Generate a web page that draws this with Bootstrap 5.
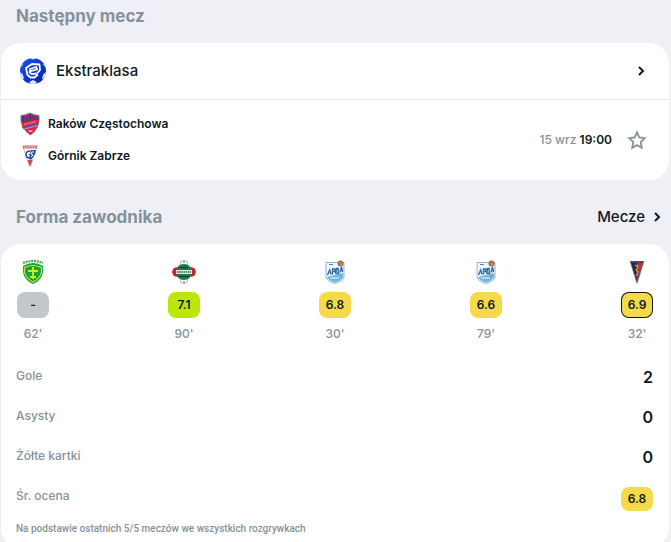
<!DOCTYPE html>
<html lang="pl">
<head>
<meta charset="utf-8">
<meta name="viewport" content="width=device-width, initial-scale=1">
<title>Następny mecz</title>
<link href="https://cdn.jsdelivr.net/npm/bootstrap@5.3.0/dist/css/bootstrap.min.css" rel="stylesheet">
<style>
body{font-family:Inter,"Liberation Sans",sans-serif;font-size:13px;line-height:16px;color:#0f1923;background:#eff0f5}
.page{padding:0 2px 0 1px}
.panel{background:#fff;border-radius:20px}
.title{font-size:17px;line-height:24px;font-weight:700;color:#85929b}
.first-head{padding:4px 15px 15px}
.next-head{padding:25px 4px 15px 15px}
.plain{color:inherit;text-decoration:none}
.plain:hover{color:#37474f}
.big{font-size:15px;line-height:24px;font-weight:500}
.league{padding:15px 20px 15px 19px;gap:10px;border-bottom:1px solid #e4e6ea}
.muted{color:#85929b}
.teams{padding:12px 21px 12px 19px}
.team{gap:8px;height:24px;font-size:12px;font-weight:600}
.crest{width:20px;height:24px}
.date{font-size:12px;font-weight:500}
.star{border:0;background:none;padding:0;margin-left:14px;line-height:0}
.stats{padding:15px 16px 11px 15px}
.games{padding-left:1px}
.game{width:32px;font-size:12px;font-weight:500}
.score{width:32px;height:26px;line-height:26px;border-radius:8px;font-size:12px;font-weight:600;text-align:center;color:#0f1923}
.s-none{background:#c3c8cc}
.s-good{background:#bbe60b}
.s-mid{background:#f4d94a}
.s-last{box-shadow:inset 0 0 0 1px #0f1923}
.game .score{margin:7px 0 8px}
.fact{height:40px;font-size:12px;font-weight:500}
.fact dt{padding-top:3px}
.facts{padding-top:23px}
.num{font-size:16px;line-height:24px;font-weight:600;color:#0f1923}
.fact .score{height:24px;line-height:24px;margin-top:2px}
.note{font-family:Roboto,"Liberation Sans",sans-serif;font-size:10px;line-height:16px;font-weight:500}
.facts + .note{margin-top:-4px!important}
</style>
<script src="https://cdn.jsdelivr.net/npm/bootstrap@5.3.0/dist/js/bootstrap.bundle.min.js"></script>
</head>
<body>
<main class="page vh-100 overflow-hidden">
<section>
  <h2 class="title first-head m-0">Następny mecz</h2>
  <div class="panel">
    <a href="#" class="plain league d-flex align-items-center">
      <svg width="26" height="26" viewBox="0 0 26 26" aria-hidden="true"><defs><clipPath id="ball"><circle cx="13" cy="13" r="13"/></clipPath><linearGradient id="bl" x2="1" y2="1"><stop stop-color="#1c55ee"/><stop offset=".6" stop-color="#0a33c8"/><stop offset="1" stop-color="#04208c"/></linearGradient></defs><g clip-path="url(#ball)"><path fill="url(#bl)" d="M0 0h26v26H0z"/><path fill="#dce7fb" d="M8 0h10l-5 1.500zM0 14l2.500 2 1.500 4-2 2-2-2zM26 14l-2.500 2-1.500 4 2 2 2-2zM9 26l1-2.500 3-1.500 3 1.500 1 2.500zM1 5l2 1-1.500 3zM25 5l-2 1 1.500 3z"/></g><path fill="none" stroke="#fff" stroke-width="1.800" stroke-linejoin="round" d="M16.500 15.500l-4.500.7-2.300-1.700.4-3.500 6.100-2 .9 2.500-6.500 1.700M18 16.500l-3.500 3h-4l-3-2.500L6 10l6-4 7.500.500L20 12l-3 3.500"/></svg>
      <span class="big flex-grow-1">Ekstraklasa</span>
      <svg width="16" height="16" viewBox="0 0 16 16" fill="none" stroke="#0f1923" stroke-width="2" aria-hidden="true"><path d="M6 4l4 4-4 4"/></svg>
    </a>
    <div class="teams d-flex align-items-center">
      <div class="d-flex flex-column gap-2 flex-grow-1">
        <div class="team d-flex align-items-center">
          <svg class="crest" viewBox="0 0 20 24" aria-hidden="true"><path fill="#dc2340" stroke="#64708a" stroke-width=".8" d="M1 3.500Q6 3 10 1q4 2 9 2.500Q20.500 16 10.500 23-.5 16 1 3.500z"/><path fill="#3a3c84" d="M2 4.500Q7 4 10 2q3 2 8 2.500V9L2 13z"/><path stroke="#b52650" stroke-width="1.300" d="M5 4v6M8.500 3v6M12 3v6M15.500 4v5"/><path fill="#e2273f" d="M2 10.500l16-3v4l-16 4z"/><path stroke="#d9a5ba" stroke-dasharray="1.500 .6" d="M4 12.500l12-3"/><path stroke="#3a62ac" stroke-width="1.800" d="M2.500 16l15.500-4"/><path stroke="#c6cbe0" stroke-width=".7" d="M3 17.500l14.500-4"/><path stroke="#fff" d="M8.500 19h4"/></svg>
          <span>Raków Częstochowa</span>
        </div>
        <div class="team d-flex align-items-center">
          <svg class="crest" viewBox="0 0 20 24" aria-hidden="true"><path fill="#fff" stroke="#a2a8b8" stroke-width=".8" d="M3 3h14l-6.500 19h-1z"/><path fill="#d4706c" d="M2.500 1.500h15l-.7 3H3.200z"/><path stroke="#f3d9d0" stroke-dasharray="1.500 1" d="M4 3h12"/><path fill="#ce4950" d="M7.500 16h5L10 23z"/><path fill="#294b99" d="M11 6h5l-1 4-4 6-2-1z"/><path fill="none" stroke="#294b99" stroke-width="1.500" d="M10.500 7Q6 7 6 10.500t4 3.500q3-1 2-3.500H9"/><path stroke="#fff" fill="none" d="M14 8q-3-1-3 2l2 1-2 2"/></svg>
          <span>Górnik Zabrze</span>
        </div>
      </div>
      <div class="date"><span class="muted">15 wrz</span> <time class="fw-semibold">19:00</time></div>
      <button type="button" class="star" aria-label="Obserwuj mecz"><svg width="22" height="22" viewBox="0 0 22 22" fill="none" stroke="#85929b" stroke-width="1.800"><path d="M11 3.500l2.300 5 5.400.6-4 3.900 1.100 5.800-4.800-2.700-4.800 2.700 1.100-5.800-4-3.900 5.400-.6z"/></svg></button>
    </div>
  </div>
</section>
<section>
  <div class="next-head d-flex justify-content-between align-items-center">
    <h2 class="title m-0">Forma zawodnika</h2>
    <a href="#" class="plain big d-flex align-items-center gap-1">Mecze <svg width="16" height="16" viewBox="0 0 16 16" fill="none" stroke="#0f1923" stroke-width="2" aria-hidden="true"><path d="M6 4l4 4-4 4"/></svg></a>
  </div>
  <div class="panel stats">
    <div class="games d-flex justify-content-between">
      <div class="game d-flex flex-column align-items-center">
        <svg width="24" height="26" viewBox="0 0 24 26" aria-hidden="true"><path fill="#16a33a" d="M2 7q10-6 20 0v6q-1 8-10 12Q3 21 2 13z"/><path fill="none" stroke="#45ad5e" stroke-width="2.400" stroke-dasharray="2 .8" d="M2 4q10-4 20 0"/><path fill="none" stroke="#c6e52a" stroke-width="1.200" d="M3.500 8.500Q12 4.500 20.500 8.500V13q-1 6-8.500 10-7.500-4-8.500-10z"/><path stroke="#d3ea29" stroke-width="1.800" d="M12 8v12M7 12h10M9 18h6"/></svg>
        <div class="score s-none">-</div><span class="muted">62'</span>
      </div>
      <div class="game d-flex flex-column align-items-center">
        <svg width="24" height="26" viewBox="0 0 24 26" aria-hidden="true"><circle cx="12" cy="5" r="3.800" fill="#fff" stroke="#a3aaa8" stroke-width=".8"/><circle cx="12" cy="21" r="3.800" fill="#fff" stroke="#a3aaa8" stroke-width=".8"/><circle cx="5" cy="13" r="4.800" fill="#ce1e2d"/><circle cx="19" cy="13" r="4.800" fill="#ce1e2d"/><circle cx="12" cy="13" r="8" fill="#187a50"/><path fill="#e2e9e5" d="M4 11h16v4H4z"/><path stroke="#60786d" stroke-width="2" stroke-dasharray="1.500 .7" d="M5 13h14"/><path stroke="#06472f" stroke-width="1.500" stroke-dasharray="2 .6" d="M8 8.500h8M7 17.500h10"/><path stroke="#4e5b57" d="M12 2v2M12 22v2"/></svg>
        <div class="score s-good">7.1</div><span class="muted">90'</span>
      </div>
      <div class="game d-flex flex-column align-items-center">
        <svg width="24" height="26" viewBox="0 0 24 26" aria-hidden="true"><g id="arda"><path fill="#eff7fc" stroke="#8eb8d0" d="M3 3.500h18V18q-1 4-9 6.500Q4 22 3 18z"/><path fill="#70b5df" d="M4 18l16-4v4q-1 3-8 5.500Q5 21 4 18z"/><path fill="none" stroke="#2f6ba5" stroke-width="1.400" d="M4.500 16l2.200-5 1.300 4.500M9.500 15.500V10h2.500v2.500h-2M12.500 14.500l1.200-5h1.500v5m-3 0h4M17 13.500L18.500 8l1 5"/><path stroke="#4c83ad" d="M6 5.500h4"/><path stroke="#d9edf7" stroke-width="1.200" d="M7 19h9"/><circle cx="17.500" cy="4.500" r="3" fill="#9a6d48"/><path stroke="#d19a67" d="M16 4h3M17 5.500h2"/></g></svg>
        <div class="score s-mid">6.8</div><span class="muted">30'</span>
      </div>
      <div class="game d-flex flex-column align-items-center">
        <svg width="24" height="26" viewBox="0 0 24 26" aria-hidden="true"><use href="#arda"/></svg>
        <div class="score s-mid">6.6</div><span class="muted">79'</span>
      </div>
      <div class="game d-flex flex-column align-items-center">
        <svg width="24" height="26" viewBox="0 0 24 26" aria-hidden="true"><path fill="#172e56" d="M5 2.500h14L12.500 24h-1z"/><path fill="#b33338" d="M12 4h6l-6 19z"/><path stroke="#77464c" stroke-width="1.500" d="M5 2.800h14"/><path fill="none" stroke="#d69a3b" stroke-width="1.300" d="M10 6l3 2-2 3 2 2-2 4M13 6l-2 1"/><path fill="none" stroke="#b8a29e" stroke-width=".6" d="M5 2.500L12 24l7-21.500"/></svg>
        <div class="score s-mid s-last">6.9</div><span class="muted">32'</span>
      </div>
    </div>
    <dl class="facts m-0">
      <div class="fact d-flex justify-content-between"><dt class="muted fw-medium">Gole</dt><dd class="num m-0">2</dd></div>
      <div class="fact d-flex justify-content-between"><dt class="muted fw-medium">Asysty</dt><dd class="num m-0">0</dd></div>
      <div class="fact d-flex justify-content-between"><dt class="muted fw-medium">Żółte kartki</dt><dd class="num m-0">0</dd></div>
      <div class="fact d-flex justify-content-between"><dt class="muted fw-medium">Śr. ocena</dt><dd class="m-0"><div class="score s-mid">6.8</div></dd></div>
    </dl>
    <p class="note muted m-0">Na podstawie ostatnich 5/5 meczów we wszystkich rozgrywkach</p>
  </div>
</section>
</main>
</body>
</html>
